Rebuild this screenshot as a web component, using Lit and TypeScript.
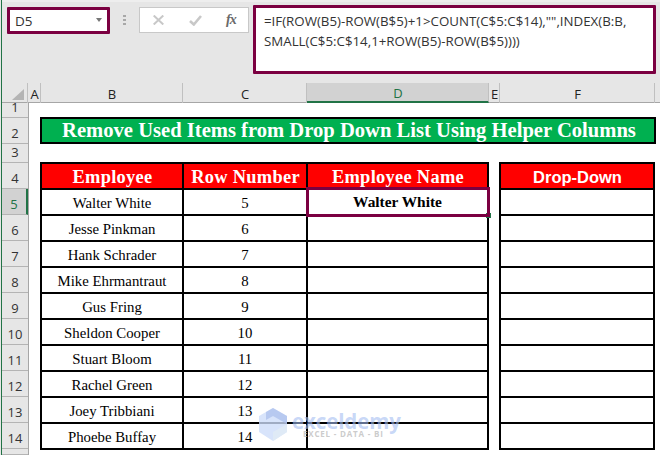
import { LitElement, html, css } from "lit";
import { customElement } from "lit/decorators.js";

const PEOPLE: [string, number][] = [
  ["Walter White", 5], ["Jesse Pinkman", 6], ["Hank Schrader", 7], ["Mike Ehrmantraut", 8], ["Gus Fring", 9],
  ["Sheldon Cooper", 10], ["Stuart Bloom", 11], ["Rachel Green", 12], ["Joey Tribbiani", 13], ["Phoebe Buffay", 14],
];
const ROWS: [number, number][] = [[1, 15], [2, 26], [3, 19], [4, 26], ...PEOPLE.map(p => [p[1], 26] as [number, number])];

@customElement("app-root")
export class AppRoot extends LitElement {
  static styles = css`
    :host { display: block; width: 660px; height: 455px; overflow: hidden; background: #e6e6e6; position: relative; font-family: "Open Sans", "Liberation Sans", sans-serif; }
    .edge { display: flex; flex-direction: column; height: 455px; margin-left: 1px; border-left: 1px solid #217346; box-sizing: border-box; background: #fff; }
    .bar { height: 83px; flex: none; background: #e6e6e6; border-top: 2px solid #eeeeee; display: flex; align-items: flex-start; box-sizing: border-box; padding: 0 4px 0 5px; }
    .name { margin-top: 5px; width: 103px; height: 27px; box-sizing: border-box; border: 3px solid #7b0041; background: #fff; display: flex; align-items: center; justify-content: space-between; padding: 0 5px 0 5px; font-size: 13.5px; color: #333; border-radius: 1px; }
    .caret { width: 0; height: 0; border-left: 3.5px solid transparent; border-right: 3.5px solid transparent; border-top: 4px solid #777; margin-top: -1px; }
    .dots { width: 29px; flex: none; margin-top: 13px; display: flex; flex-direction: column; align-items: center; gap: 2px; }
    .dots i { width: 3px; height: 2px; background: #a8a8a8; display: block; }
    .fxbox { margin-top: 5px; width: 110px; height: 26px; box-sizing: border-box; background: #fff; border: 1px solid #c8c8c8; display: flex; align-items: center; padding-left: 13px; }
    .fxbox svg { display: block; }
    .ok { margin-left: 25px; }
    .fx { margin-left: 24px; font: italic bold 14px "Liberation Serif", serif; color: #6a6a6a; letter-spacing: -1px; }
    .formula { margin: 3px 0 0 4px; width: 403px; height: 69px; box-sizing: border-box; border: 3px solid #7b0041; background: #fff; padding: 3px 0 0 8px; font-size: 13.3px; line-height: 20px; color: #333; white-space: pre; border-radius: 1px; }
    .cols { height: 20px; flex: none; background: #e6e6e6; display: grid; grid-template-columns: 26px 13px 142px 124px 182px 11px 155px 1fr; border-bottom: 1px solid #a6a6a6; box-sizing: border-box; font: 13px "Open Sans", sans-serif; color: #222; }
    .col { display: flex; align-items: center; justify-content: center; border-right: 1px solid #c0c0c0; box-sizing: border-box; padding: 1px 0 0 1px; }
    .corner { border-right: 1px solid #c0c0c0; display: flex; align-items: flex-end; justify-content: flex-end; padding: 0 3px 3px 0; }
    .corner b { width: 0; height: 0; border-left: 12px solid transparent; border-bottom: 11px solid #b4b4b4; display: block; }
    .col.on { background: #d2d2d2; border-bottom: 2px solid #217346; color: #217346; height: 20px; }
    .col.last { border-right: none; }
    .sheet { flex: 1; display: flex; min-height: 0; }
    .heads { width: 26px; flex: none; background: #e6e6e6; border-right: 1px solid #a6a6a6; }
    .rh { display: flex; align-items: flex-end; justify-content: center; box-sizing: border-box; border-bottom: 1px solid #b4b4b4; font: 13px/14px "Open Sans", sans-serif; color: #333; padding-bottom: 3px; }
    .rh.stub { padding: 0; }
    .rh.on { background: #d2d2d2; color: #217346; border-right: 2px solid #217346; }
    .grid { flex: 1; padding: 14px 0 0 11px; min-width: 0; position: relative; }
    .title { width: 616px; height: 27px; box-sizing: border-box; border: 2px solid #000; background: #00b050; color: #fff; font: bold 20.6px "Liberation Serif", serif; display: flex; align-items: center; justify-content: center; white-space: nowrap; padding: 0 0 1px 2px; }
    .s3 { height: 18px; }
    .tables { display: flex; align-items: flex-start; gap: 10px; }
    .tbl { display: grid; background: #000; gap: 2px; padding: 2px; }
    .t1 { grid-template-columns: 140px 122px 179px; grid-auto-rows: 24px; }
    .t2 { grid-template-columns: 152px; grid-auto-rows: 24px; }
    .cell { background: #fff; display: flex; align-items: center; justify-content: center; font: 14.8px "Liberation Serif", serif; color: #000; white-space: nowrap; box-sizing: border-box; padding-top: 2px; }
    .hd { background: #f00; color: #fff; font: bold 18.4px "Liberation Serif", serif; letter-spacing: .3px; padding: 2px 0 0 1px; }
    .hd.sans { font: bold 16.5px "Liberation Sans", sans-serif; letter-spacing: 0; }
    .sel { position: relative; font-weight: bold; font-size: 15.4px; padding-top: 0; }
    .sel::before { content: ""; position: absolute; right: -4px; bottom: -4px; width: 5px; height: 5px; background: #217346; z-index: 1; }
    .sel::after { content: ""; position: absolute; inset: -3px -3px -3px -2px; border: 3px solid #7b0041; z-index: 2; pointer-events: none; }
    .wm { position: absolute; left: 227px; top: 305px; width: 150px; height: 36px; pointer-events: none; z-index: 3; }
    .wmtext { position: absolute; left: 36px; top: 4px; font: bold 20.5px/18px "Open Sans", sans-serif; color: rgba(165,190,242,.62); letter-spacing: -.1px; }
    .wmsub { position: absolute; left: 47px; top: 23px; font: bold 8px/6px "Open Sans", sans-serif; color: rgba(190,190,190,.8); letter-spacing: .8px; white-space: nowrap; }
    .wm svg { position: absolute; left: 3px; top: 0; }
  `;

  render() {
    return html`<div class="edge">
      <div class="bar">
        <div class="name"><span>D5</span><span class="caret"></span></div>
        <div class="dots"><i></i><i></i><i></i></div>
        <div class="fxbox">
          <svg width="11" height="10" viewBox="0 0 11 10"><path d="M.7.5L10.3 9.5M10.3.5L.7 9.5" stroke="#c8c8c8" stroke-width="2" fill="none"/></svg>
          <svg class="ok" width="13" height="11" viewBox="0 0 13 11"><path d="M1 6L4.8 9.5L12 1" stroke="#c8c8c8" stroke-width="2.6" fill="none"/></svg>
          <span class="fx">fx</span>
        </div>
        <div class="formula">=IF(ROW(B5)-ROW(B$5)+1&gt;COUNT(C$5:C$14),"",INDEX(B:B,
SMALL(C$5:C$14,1+ROW(B5)-ROW(B$5))))</div>
      </div>
      <div class="cols">
        <div class="corner"><b></b></div>
        <div class="col">A</div><div class="col">B</div><div class="col">C</div>
        <div class="col on">D</div><div class="col">E</div><div class="col">F</div><div class="col last"></div>
      </div>
      <div class="sheet">
        <div class="heads">
          ${ROWS.map(([n, h]) => html`<div class="rh ${n === 5 ? "on" : ""}" style="height:${h}px">${n}</div>`)}
          <div class="rh stub" style="height:6px"></div>
        </div>
        <div class="grid">
          <div class="title">Remove Used Items from Drop Down List Using Helper Columns</div>
          <div class="s3"></div>
          <div class="tables">
            <div class="tbl t1">
              <div class="cell hd">Employee</div><div class="cell hd">Row Number</div><div class="cell hd">Employee Name</div>
              ${PEOPLE.map(([name, n], i) => html`
                <div class="cell">${name}</div><div class="cell">${n}</div>
                <div class="cell ${i === 0 ? "sel" : ""}">${i === 0 ? name : ""}</div>`)}
            </div>
            <div class="tbl t2">
              <div class="cell hd sans">Drop-Down</div>
              ${PEOPLE.map(() => html`<div class="cell"></div>`)}
            </div>
          </div>
          <div class="wm">
            <svg width="28" height="33" viewBox="0 0 28 33">
              <path d="M14 0L28 8V24L14 33L0 24V8Z" fill="rgba(205,220,250,.78)"/>
              <path d="M14 0L28 8V16L14 8L7 12V4Z" fill="rgba(170,190,235,.7)"/>
              <path d="M14 33L28 24V16L14 24Z" fill="rgba(225,235,245,.85)"/>
            </svg>
            <span class="wmtext">exceldemy</span>
            <span class="wmsub">EXCEL - DATA - BI</span>
          </div>
        </div>
      </div>
    </div>`;
  }
}
